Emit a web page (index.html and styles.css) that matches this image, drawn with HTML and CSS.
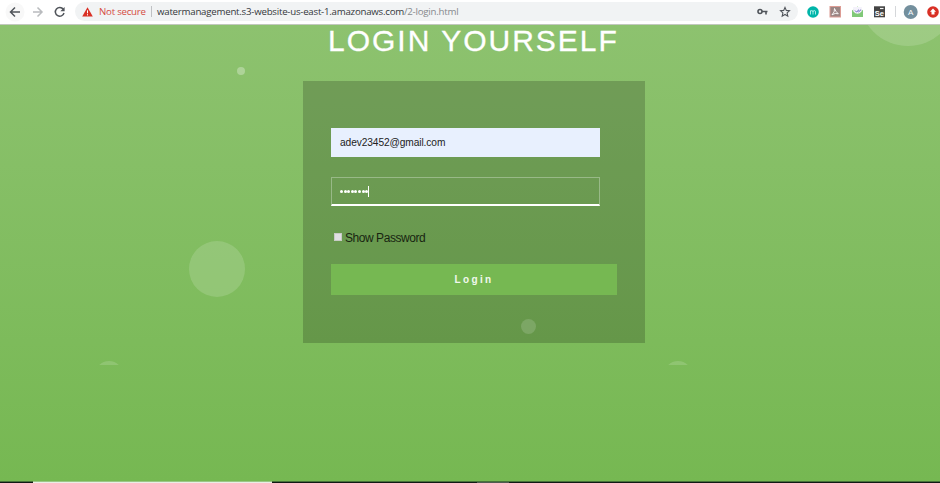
FILE: index.html
```html
<!DOCTYPE html>
<html lang="en">
<head>
<meta charset="utf-8">
<title>Login</title>
<link rel="stylesheet" href="styles.css">
</head>
<body>
<header class="toolbar">
  <svg class="nav" width="68" height="24" viewBox="0 0 68 24" fill="none" stroke-width="1.5">
    <circle cx="15" cy="12" r="9.5" fill="#f8f8f8"/>
    <path d="M20 12H11M15 7.5L10.5 12l4.500 4.500" stroke="#50545a"/>
    <path d="M33 12H42M37.500 7.500L42 12l-4.500 4.500" stroke="#b9bbbe"/>
    <path d="M63.300 9.200A4.400 4.400 0 1 0 64 13" stroke="#50545a"/>
    <path d="M64.600 7v4.300h-4.300z" fill="#50545a"/>
  </svg>
  <div class="address">
    <svg class="warning" width="11" height="10" viewBox="0 0 11 10"><path d="M5.500 .3L10.800 9.500H.2z" fill="#d93025"/><path d="M5.500 3.300v3M5.500 7.200v1.200" stroke="#fff"/></svg>
    <span class="insecure">Not secure</span>
    <span class="divider"></span>
    <span class="url">watermanagement.s3-website-us-east-1.amazonaws.com<span class="path">/2-login.html</span></span>
    <svg class="key" width="11" height="8" viewBox="0 0 11 8" fill="none" stroke="#50545a" stroke-width="1.600"><circle cx="3" cy="3.500" r="2"/><path d="M5 3.500h5.500M9 3.500v3"/></svg>
    <svg class="star" width="12" height="12" viewBox="0 0 12 12" fill="none" stroke="#50545a" stroke-width="1.100"><path d="M6 1.400l1.300 3 3.200.3-2.400 2.200.7 3.300L6 8.500l-2.800 1.700.7-3.300-2.400-2.200 3.200-.3z"/></svg>
  </div>
  <svg class="extensions" width="142" height="24" viewBox="0 0 142 24">
    <circle cx="15" cy="12" r="5.800" fill="#00b5a9"/>
    <path d="M12.500 14.500v-4M12.500 12q0-1.500 1.250-1.500T15 12v2.500M15 12q0-1.500 1.250-1.500T17.500 12v2.500" fill="none" stroke="#b9f2ec" stroke-width=".9"/>
    <rect x="32" y="6.500" width="10.500" height="10.500" fill="#9a8583" stroke="#dc9c94"/>
    <path d="M36.500 8.500q1 3 3.800 5.300-3-1.200-6.300 1 3-2.800 2.500-6.300" fill="none" stroke="#fff" stroke-width=".9"/>
    <path d="M54 10.500l5.500-4 5.500 4V17H54z" fill="#80c878"/>
    <path d="M55.200 7h8.600v4.200q-4.300 5-8.600 0z" fill="#f4f2fb"/>
    <path d="M57 10.500l1.500 1.500L61 9.700M60 11.500l.5.500L63 9.700" stroke="#6b62c5" fill="none"/>
    <rect x="76" y="6.300" width="11" height="11" fill="#444"/>
    <path d="M82 8.500h3.500" stroke="#f3f3f3" stroke-width="1.200"/>
    <text x="76.800" y="16" class="se">Se</text>
    <path d="M97.500 6v11" stroke="#d5d7da"/>
    <circle cx="112.700" cy="12" r="7" fill="#738f9d"/>
    <text x="112.700" y="15" text-anchor="middle" class="avatar">A</text>
    <circle cx="135" cy="12" r="5.800" fill="#d93025"/>
    <path d="M135 8.500l3 3.300h-1.500v2.700h-3v-2.700H132z" fill="#fff"/>
  </svg>
</header>
<main class="page">
  <div class="bubbles">
    <i class="bubble huge"></i><i class="bubble tiny"></i><i class="bubble large"></i><i class="bubble left"></i><i class="bubble right"></i><i class="bubble small"></i>
  </div>
  <h1>LOGIN YOURSELF</h1>
  <form class="card">
    <div class="field email">adev23452@gmail.com</div>
    <div class="field password"><span class="dots"><i></i><i></i><i></i><i></i><i></i><i></i><i></i><i></i></span><span class="caret"></span></div>
    <label class="show"><span class="box"></span><span class="label">Show Password</span></label>
    <button type="button">Login</button>
  </form>
</main>
<footer class="taskbar"><span class="task"></span><span class="active"></span></footer>
</body>
</html>
```
FILE: styles.css
```css
* { box-sizing: border-box; }
body {
  margin: 0;
  width: 940px;
  height: 483px;
  overflow: hidden;
  display: flex;
  flex-direction: column;
  font-family: "Liberation Sans", Arial, sans-serif;
}
.toolbar {
  display: flex;
  align-items: flex-start;
  height: 25px;
  flex: none;
  background: #fff;
  border-bottom: 1px solid #c2c8be;
}
.nav, .extensions { flex: none; display: block; }
.nav { margin-right: 7px; }
.address {
  display: flex;
  align-items: center;
  width: 723px;
  height: 19px;
  margin-top: 2px;
  padding-left: 7px;
  border-radius: 10px;
  background: #f1f3f4;
  font: 9.7px/19px "Open Sans", "Noto Sans", sans-serif;
  letter-spacing: -.24px;
  color: #34373b;
  white-space: nowrap;
}
.insecure { width: 47px; margin-left: 6px; color: #d54b42; }
.divider { width: 1px; height: 11px; margin: 0 5px; background: #bfc1c4; }
.url { width: 600px; }
.path { color: #85898d; }
.key { flex: none; margin-left: auto; }
.star { flex: none; margin: 0 7px 0 11px; }
.se { font: bold 7.5px "Liberation Sans", sans-serif; fill: #fff; }
.avatar { font: 8px "Liberation Sans", sans-serif; fill: #fff; }
.page {
  position: relative;
  flex: 1;
  background: linear-gradient(to bottom, #8dc26f, #76b852);
}
.bubbles { position: absolute; inset: 0 0 auto; height: 340px; overflow: hidden; }
.bubble { position: absolute; border-radius: 50%; background: rgba(255,255,255,.15); }
.huge { width: 98px; height: 98px; left: 859px; top: -77px; }
.tiny { width: 8px; height: 8px; left: 237px; top: 42px; background: rgba(255,255,255,.3); }
.large { width: 56px; height: 56px; left: 189px; top: 216px; }
.left { width: 28px; height: 28px; left: 95px; top: 335.500px; }
.right { width: 28px; height: 28px; left: 664px; top: 335.500px; }
.small { width: 15px; height: 15px; left: 521px; top: 294px; }
h1 {
  position: relative;
  margin: 0 0 24px 328px;
  font-size: 30px;
  line-height: 32px;
  font-weight: 400;
  letter-spacing: 2px;
  color: #fff;
  -webkit-text-stroke: .3px #fff;
  white-space: nowrap;
}
.card {
  width: 342px;
  height: 262px;
  margin-left: 303px;
  padding: 47px 28px 0;
  background: rgba(0,0,0,.19);
}
.field {
  display: flex;
  align-items: center;
  width: 269px;
  height: 29px;
  padding-left: 8px;
  border: 1px solid #98b987;
  font-size: 10.200px;
  letter-spacing: -.1px;
}
.email { background: #e8f0fe; border-color: #e8f0fe; color: #222; }
.password { margin-top: 20px; border-bottom: 2px solid #fff; }
.dots { display: flex; gap: .6px; }
.dots i { width: 3px; height: 3px; border-radius: 50%; background: #fff; }
.caret { width: 1px; height: 11px; background: #fff; }
.show {
  display: flex;
  align-items: center;
  height: 20px;
  margin-top: 21px;
  padding-left: 3px;
  font-size: 12px;
  letter-spacing: -.45px;
  color: #182511;
}
.box { width: 8px; height: 8px; margin: 0 3px 0 0; background: #e0dfe2; border: 1px solid #c8cbc6; }
.label { padding-top: 2px; }
button {
  display: block;
  width: 286px;
  height: 31px;
  margin: 17px 0 0;
  padding: 0;
  border: 0;
  background: #76b852;
  color: #f1f8ed;
  font: bold 10px "Liberation Sans", Arial, sans-serif;
  letter-spacing: 2.400px;
}
.taskbar { display: flex; height: 2px; flex: none; background: #101a14; border-top: 1px solid #477339; }
.task { width: 239px; margin: -1px 0 0 33px; background: #e9efe5; border-top: 1px solid #9bc786; }
.active { width: 32px; margin-left: 205px; background: #4e5b50; }
```
